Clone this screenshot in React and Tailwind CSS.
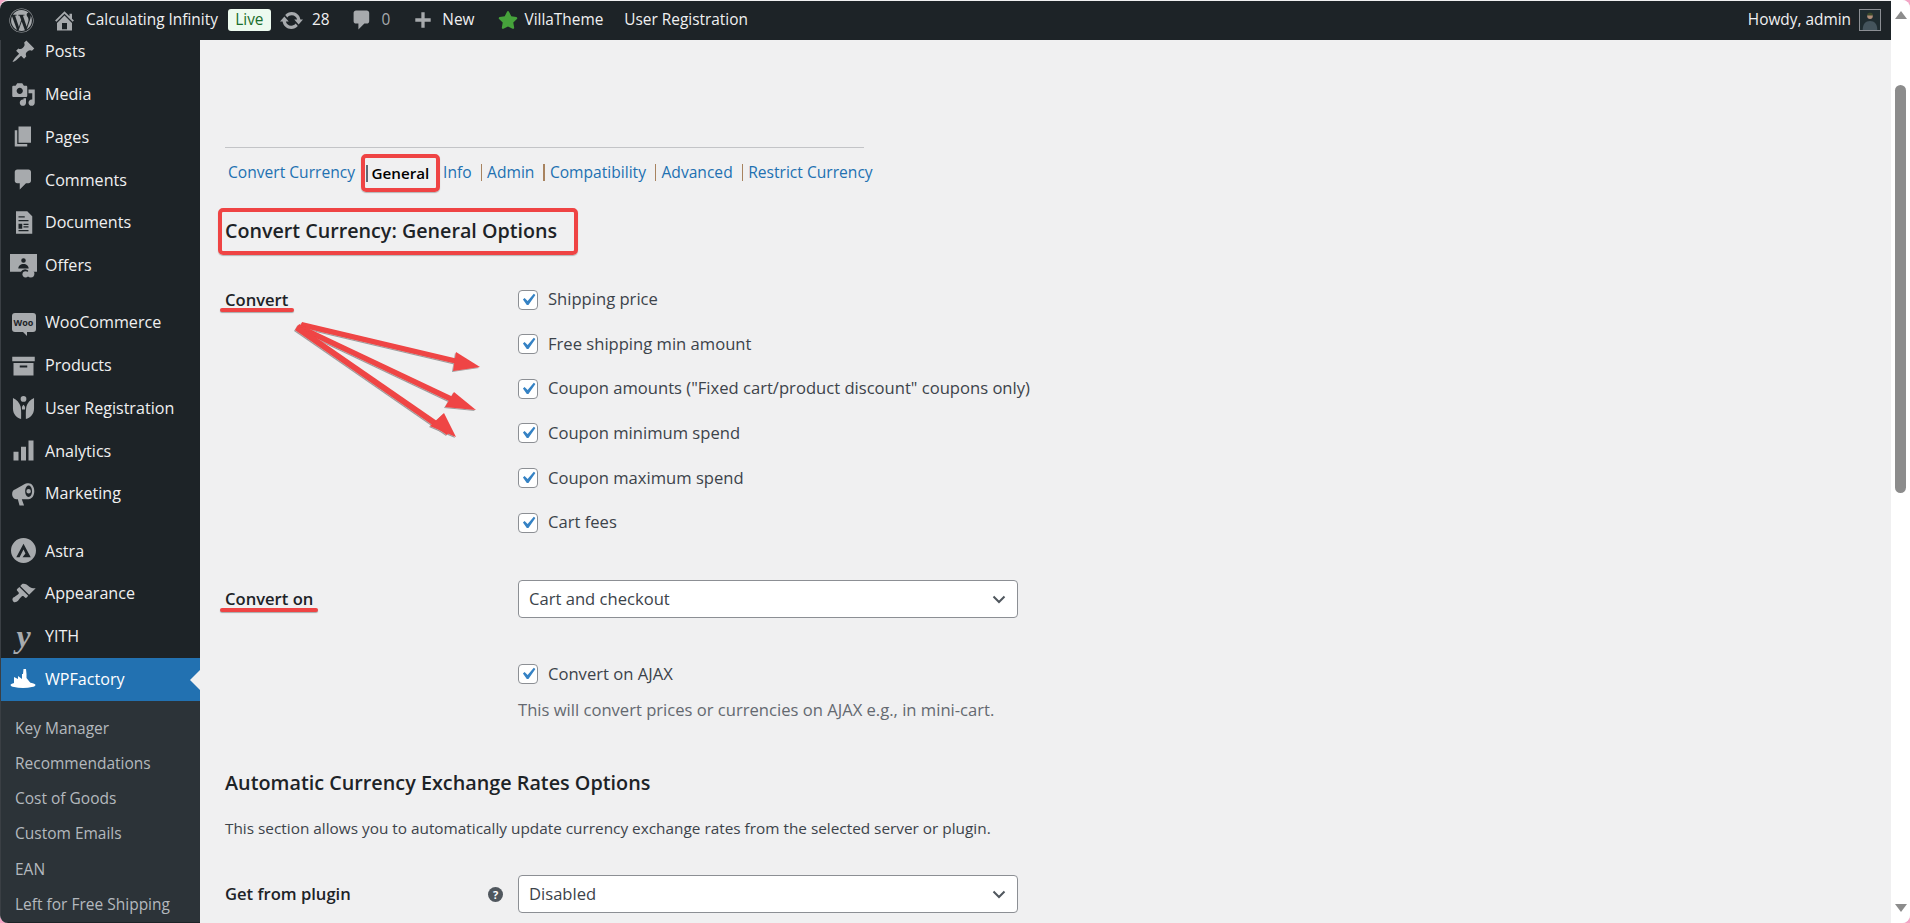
import React from 'react';
import { FaWordpress, FaStar } from 'react-icons/fa';

const Dash = ({ d, className = 'w-[25px] h-[25px] text-[#a7aaad]' }) => (
  <svg viewBox="0 0 20 20" fill="currentColor" className={className}><path d={d} /></svg>
);

const paths = {
  post: 'M10.44 3.02l1.82-1.82 6.36 6.35-1.83 1.82c-1.05-.68-2.48-.57-3.41.36l-.75.75c-.92.93-1.04 2.35-.35 3.41l-1.83 1.82-2.41-2.41-2.8 2.79c-.42.42-3.38 2.71-3.8 2.29s1.86-3.39 2.28-3.81l2.79-2.79L4.1 9.36l1.83-1.82c1.05.69 2.48.57 3.4-.36l.75-.75c.93-.92 1.05-2.35.36-3.41z',
  media: 'M13 11V4c0-.55-.45-1-1-1h-1.67L9 1H5L3.67 3H2c-.55 0-1 .45-1 1v7c0 .55.45 1 1 1h10c.55 0 1-.45 1-1zM7 4.5c1.38 0 2.5 1.12 2.5 2.5S8.38 9.5 7 9.5 4.5 8.38 4.5 7 5.62 4.5 7 4.5zM14 6h5v10.5c0 1.38-1.12 2.5-2.5 2.5S14 17.88 14 16.5s1.12-2.5 2.5-2.5c.17 0 .34.02.5.05V9h-3V6zm-4 8.05V13h2v3.5c0 1.38-1.12 2.5-2.5 2.5S7 17.88 7 16.5 8.12 14 9.5 14c.17 0 .34.02.5.05z',
  page: 'M6 15V2h10v13H6zm-1 1h8v2H3V5h2v11z',
  comment: 'M5 2h9c1.1 0 2 .9 2 2v7c0 1.1-.9 2-2 2h-2l-5 5v-5H5c-1.1 0-2-.9-2-2V4c0-1.1.9-2 2-2z',
  home: 'M16 8.5l1.53 1.53-1.06 1.06L10 4.62l-6.47 6.47-1.06-1.06L10 2.5l4 4v-2h2v4zm-6-2.46l6 5.99V18H4v-5.97zM12 17v-5H8v5h4z',
  update: 'M10.2 3.28c3.53 0 6.43 2.61 6.92 6h2.08l-3.5 4-3.5-4h2.32c-.45-1.97-2.21-3.45-4.32-3.45-1.45 0-2.73.71-3.54 1.78L4.95 5.66C6.23 4.2 8.11 3.28 10.2 3.28zm-.4 13.44c-3.52 0-6.43-2.61-6.92-6H.8l3.5-4c1.17 1.33 2.33 2.67 3.5 4H5.48c.45 1.97 2.21 3.45 4.32 3.45 1.45 0 2.73-.71 3.54-1.78l1.71 1.95c-1.28 1.46-3.15 2.38-5.25 2.38z',
  plus: 'M17 8.5v3h-5.5V17h-3v-5.5H3v-3h5.5V3h3v5.5H17z',
  products: 'M19 6.5V3H1v3.5h18zM2 8v10h16V8H2zm5 2h6v1.5H7V10z',
  analytics: 'M18 18V2h-4v16h4zm-6 0V7H8v11h4zm-6 0v-7H2v7h4z',
  brush: 'M14.48 11.06L7.41 3.99l1.5-1.5c.5-.56 2.3-.47 3.51.32 1.21.8 1.43 1.28 2.91 2.1 1.18.64 2.45 1.26 4.45.85zm-.71.71L6.7 4.7 4.93 6.47c-.39.39-.39 1.02 0 1.41l1.06 1.06c.39.39.39 1.03 0 1.42-.6.6-1.43 1.11-2.21 1.69-.35.26-.7.53-1.01.84C1.43 13.23.4 14.96 1.95 16.5c.94.95 2.86.15 3.68-.75.7-.75 1.13-1.57 1.68-2.13.46-.47.86-.9 1.38-1.4.39-.39 1.03-.39 1.42 0l1.06 1.06c.39.39 1.02.39 1.41 0z',
};

const Documents = () => (
  <svg viewBox="0 0 20 20" className="w-[25px] h-[25px] text-[#a7aaad]" fill="currentColor">
    <path fillRule="evenodd" d="M4 1h9l4 4v14H4V1zm2 4v1h5V5H6zm0 3v1h8V8H6zm0 3v4h3v-4H6zm4 0v1h4v-1h-4zm0 2v1h4v-1h-4zm-4 3v1h8v-1H6z" />
  </svg>
);

const Offers = () => (
  <svg viewBox="0 0 26 24" className="w-[27px] h-[25px] text-[#a7aaad]" fill="currentColor">
    <path fillRule="evenodd" d="M0 1h26v17h-7.5a4.5 4.5 0 0 0-8 0H0V1zm13 4a2.2 2.2 0 1 0 0 4.400a2.200 2.200 0 0 0 0-4.400zm-5 10h10c0-2.800-2.200-4.500-5-4.500S8 12.200 8 15z" />
    <circle cx="15" cy="20.500" r="3" />
    <circle cx="20" cy="20" r="3.500" />
  </svg>
);

const Woo = () => (
  <div className="relative w-[24px] h-[19px] rounded-[3px] bg-[#a7aaad] flex items-center justify-center">
    <span className="text-[9px] leading-none font-bold text-[#1d2327]">Woo</span>
    <span className="absolute -bottom-[4px] left-[11px] w-0 h-0 border-t-[4px] border-t-[#a7aaad] border-l-[4px] border-l-transparent" />
  </div>
);

const UserReg = () => (
  <svg viewBox="0 0 24 26" className="w-[23px] h-[25px] text-[#a7aaad]" fill="currentColor">
    <circle cx="12" cy="4" r="3" />
    <path d="M1 3c4 2 7 5 8 9 .800 4 .500 9 .500 13C5 24 1 20 1 14V3z" />
    <path d="M23 3c-4 2-7 5-8 9-.800 4-.500 9-.500 13C19 24 23 20 23 14V3z" />
    <path d="M12 10c-1.500 1-2 3-1.500 5h3c.500-2 0-4-1.500-5z" />
  </svg>
);

const Megaphone = () => (
  <svg viewBox="0 0 22 22" className="w-[25px] h-[25px] text-[#a7aaad]" fill="currentColor">
    <path fillRule="evenodd" d="M15.500 2c2.800 0 5 3.100 5 7s-2.200 7-5 7H9.500l2 5.500H7.500L6 16H4.500C2.500 16 1 14 1 11.500S2 8 3.500 7.500l9-5C13.500 2 14.500 2 15.500 2zm0 2c-1.700 0-3 2.200-3 5s1.300 5 3 5 3-2.200 3-5-1.300-5-3-5zm0 3a2 2 0 1 1 0 4 2 2 0 0 1 0-4z" />
  </svg>
);

const Astra = () => (
  <svg viewBox="0 0 26 26" className="w-[25px] h-[25px] text-[#a7aaad]" fill="currentColor">
    <path fillRule="evenodd" d="M13 0a13 13 0 1 1 0 26 13 13 0 0 1 0-26zm0 6L5.500 20h3.400L13 12l2 4-3 4h8.500L13 6z" />
  </svg>
);

const Yith = () => (
  <span className="w-[25px] text-center text-[32px] leading-[22px] font-bold italic text-[#a7aaad] font-['Liberation_Serif',serif]">y</span>
);

const Factory = () => (
  <svg viewBox="0 0 26 22" className="w-[26px] h-[22px] text-white" fill="currentColor">
    <path d="M4 15V9l4 2V8l4 3V6h1l.500-5h2.500l.500 5v4l4 5H4z" />
    <ellipse cx="13" cy="17" rx="12.500" ry="3" />
  </svg>
);

const menuGroups = [
  [
    { label: 'Posts', icon: <Dash d={paths.post} /> },
    { label: 'Media', icon: <Dash d={paths.media} /> },
    { label: 'Pages', icon: <Dash d={paths.page} /> },
    { label: 'Comments', icon: <Dash d={paths.comment} /> },
    { label: 'Documents', icon: <Documents /> },
    { label: 'Offers', icon: <Offers /> },
  ],
  [
    { label: 'WooCommerce', icon: <Woo /> },
    { label: 'Products', icon: <Dash d={paths.products} /> },
    { label: 'User Registration', icon: <UserReg /> },
    { label: 'Analytics', icon: <Dash d={paths.analytics} /> },
    { label: 'Marketing', icon: <Megaphone /> },
  ],
  [
    { label: 'Astra', icon: <Astra /> },
    { label: 'Appearance', icon: <Dash d={paths.brush} /> },
    { label: 'YITH', icon: <Yith /> },
  ],
];

const subItems = ['Key Manager', 'Recommendations', 'Cost of Goods', 'Custom Emails', 'EAN', 'Left for Free Shipping'];

function MenuRow({ label, icon }) {
  return (
    <div className="flex items-center h-[42.75px] text-[#f0f0f1] text-[16.1px]">
      <div className="w-[44px] flex justify-center shrink-0 pl-[1px]">{icon}</div>
      <span>{label}</span>
    </div>
  );
}

function Sidebar() {
  return (
    <aside className="w-[200px] shrink-0 bg-[#1d2327] overflow-hidden rounded-bl-[8px] border-l border-l-[#3a3f44]">
      <div className="-mt-[10px] flex flex-col gap-[14.5px]">
        {menuGroups.map((group, i) => (
          <div key={i}>
            {group.map((item) => <MenuRow key={item.label} {...item} />)}
          </div>
        ))}
      </div>
      <div className="relative flex items-center h-[43px] bg-[#2271b1] text-white text-[16.1px]">
        <div className="w-[44px] flex justify-center shrink-0"><Factory /></div>
        <span>WPFactory</span>
        <span className="absolute right-0 top-[12px] w-0 h-0 border-y-[10px] border-y-transparent border-r-[10px] border-r-[#f0f0f1]" />
      </div>
      <div className="bg-[#2c3338] pt-[10px] pl-[14px] text-[15.5px] text-[#b4b9be]">
        {subItems.map((s) => (
          <div key={s} className="h-[35.3px] flex items-center">{s}</div>
        ))}
      </div>
    </aside>
  );
}

function AdminBar() {
  return (
    <header className="h-[39px] mt-[1px] shrink-0 bg-[#1d2327] flex items-center text-[#f0f0f1] rounded-tl-[8px] mr-[19px] text-[15.4px] pb-[1px] pl-[9px] pr-[10px]">
      <FaWordpress className="w-[25px] h-[25px] text-[#a7aaad]" />
      <div className="ml-[18px] flex items-center gap-[9px]">
        <Dash d={paths.home} />
        <span>Calculating Infinity</span>
      </div>
      <span className="ml-[10px] w-[43px] h-[22px] rounded-[3px] bg-[#edfaef] text-[#1a6e2c] flex items-center justify-center">Live</span>
      <div className="ml-[8px] flex items-center gap-[8px]">
        <Dash d={paths.update} className="w-[25px] h-[25px] text-[#a7aaad]" />
        <span>28</span>
      </div>
      <div className="ml-[21px] flex items-center gap-[7px]">
        <Dash d={paths.comment} className="w-[24px] h-[24px] text-[#a7aaad]" />
        <span className="text-[#a7aaad]">0</span>
      </div>
      <div className="ml-[22px] flex items-center gap-[8px]">
        <Dash d={paths.plus} className="w-[22px] h-[22px] text-[#a7aaad]" />
        <span>New</span>
      </div>
      <div className="ml-[24px] flex items-center gap-[6px]">
        <FaStar className="w-[20px] h-[20px] text-[#46a23b]" />
        <span>VillaTheme</span>
      </div>
      <span className="ml-[21px]">User Registration</span>
      <div className="ml-auto flex items-center gap-[8px]">
        <span>Howdy, admin</span>
        <svg viewBox="0 0 22 22" className="w-[22px] h-[22px] border border-[#8c8f94] bg-[#1f2c30]">
          <circle cx="11" cy="7" r="3" fill="#b08d78" />
          <path d="M8 4.500c1-2 5-2 6 0l-.500 1.500h-5z" fill="#3b4a2a" />
          <path d="M3 22c0-7 3-10 8-10s8 3 8 10z" fill="#44545c" />
        </svg>
      </div>
    </header>
  );
}

function Checkbox() {
  return (
    <div className="w-[20px] h-[20px] shrink-0 bg-white border border-[#8c8f94] rounded-[4px] flex items-center justify-center">
      <svg viewBox="0 0 20 20" className="w-[24px] h-[24px] shrink-0 text-[#3582c4]" fill="currentColor">
        <path d="M14.830 4.890l1.340.940-5.810 8.380H9.020L5.780 9.670l1.340-1.250 2.570 2.400z" />
      </svg>
    </div>
  );
}

function CheckRow({ label }) {
  return (
    <div className="flex items-center gap-[10px] h-[44.6px]">
      <Checkbox />
      <span>{label}</span>
    </div>
  );
}

function Select({ value }) {
  return (
    <div className="w-[500px] h-[38px] bg-white border border-[#8c8f94] rounded-[4px] flex items-center justify-between pl-[10px] pr-[10px]">
      <span>{value}</span>
      <svg viewBox="0 0 16 16" className="w-[16px] h-[16px] text-[#50575e]" fill="none" stroke="currentColor" strokeWidth="2">
        <path d="M2.500 5.500L8 11l5.500-5.500" />
      </svg>
    </div>
  );
}

function RedLine({ className }) {
  return <div className={`absolute h-[4px] rounded-full bg-[#ef4444] shadow-[0_1px_1px_rgba(0,0,0,0.3)] ${className}`} />;
}

function Arrows() {
  return (
    <svg className="absolute left-[73px] top-[47px] w-[190px] h-[120px] overflow-visible" viewBox="0 0 190 120" fill="none">
      <defs>
        <filter id="sh" x="-10%" y="-10%" width="120%" height="120%"><feDropShadow dx="-1" dy="1" stdDeviation="0.500" floodColor="#000" floodOpacity="0.350" /></filter>
      </defs>
      <g filter="url(#sh)" fill="#ef4444">
        <path d="M4 -2L173 38L172 43L2 3Z" />
        <path d="M158 28L182 43L155 47Z" />
        <path d="M1 0L170 80L168 85L-1 5Z" />
        <path d="M156 68L178 86L147 83Z" />
        <path d="M0 1L152 106L149 111L-3 6Z" />
        <path d="M146 89L158 113L132 102Z" />
      </g>
    </svg>
  );
}

const navItems = ['Info', 'Admin', 'Compatibility', 'Advanced', 'Restrict Currency'];

function Tabs() {
  return (
    <div className="w-[639px] border-t border-t-[#c3c4c7] flex items-center h-[52px] pl-[3px] text-[15.6px] text-[#2271b1] pb-[1px] whitespace-nowrap">
      <span>Convert Currency</span>
      <div className="ml-[6px] w-[79px] h-[38px] border-4 border-[#ef4444] rounded-[5px] flex items-center shrink-0 shadow-[0_1px_1px_rgba(0,0,0,0.25)]">
        <span className="w-[1.5px] h-[17px] ml-[1px] bg-[#5f6a75]" />
        <span className="font-semibold text-black text-[15.2px] ml-[4px]">General</span>
      </div>
      <div className="ml-[3px] flex">
        {navItems.map((n, i) => (
          <span key={n} className="flex items-center">
            {i > 0 && <span className="w-[1.5px] h-[17px] ml-[9px] mr-[5px] bg-[#a8835f]" />}
            {n}
          </span>
        ))}
      </div>
    </div>
  );
}

function Main() {
  return (
    <main className="flex-1 pl-[25px] pt-[107px] text-[16.6px] text-[#3c434a] overflow-hidden">
      <Tabs />
      <div className="mt-[9px] -ml-[7px] w-[360px] h-[47px] border-4 border-[#ef4444] rounded-[5px] flex items-center pl-[3px] pb-[2px] text-[19.7px] font-semibold text-[#1d2327] shadow-[0_1px_1px_rgba(0,0,0,0.25)]">
        Convert Currency: General Options
      </div>

      <div className="relative flex mt-[22.4px]">
        <div className="w-[293px] shrink-0 font-semibold text-[#1d2327] pt-[11px] leading-[23px]">Convert</div>
        <RedLine className="left-[-5px] top-[31px] w-[74px]" />
        <Arrows />
        <div>
          {['Shipping price', 'Free shipping min amount', 'Coupon amounts ("Fixed cart/product discount" coupons only)', 'Coupon minimum spend', 'Coupon maximum spend', 'Cart fees'].map((l) => (
            <CheckRow key={l} label={l} />
          ))}
        </div>
      </div>

      <div className="relative flex mt-[35px]">
        <div className="w-[293px] shrink-0 font-semibold text-[#1d2327] pt-[7px] leading-[23px]">Convert on</div>
        <RedLine className="left-[-5px] top-[28px] w-[98px]" />
        <Select value="Cart and checkout" />
      </div>

      <div className="pl-[293px] mt-[44px]">
        <div className="flex items-center gap-[10px] h-[24px]">
          <Checkbox />
          <span>Convert on AJAX</span>
        </div>
        <p className="mt-[12.5px] leading-[23px] text-[#646970]">This will convert prices or currencies on AJAX e.g., in mini-cart.</p>
      </div>

      <h2 className="mt-[49px] text-[19.8px] leading-[26px] font-semibold text-[#1d2327]">Automatic Currency Exchange Rates Options</h2>
      <p className="mt-[21px] leading-[22px] text-[15.35px]">This section allows you to automatically update currency exchange rates from the selected server or plugin.</p>

      <div className="flex items-center mt-[36px]">
        <div className="w-[293px] shrink-0 flex items-center justify-between pr-[15px]">
          <span className="font-semibold text-[#1d2327]">Get from plugin</span>
          <span className="w-[15px] h-[15px] rounded-full bg-[#50575e] text-white text-[11px] font-bold leading-none flex items-center justify-center">?</span>
        </div>
        <Select value="Disabled" />
      </div>
    </main>
  );
}

function Scrollbar() {
  return (
    <div className="absolute right-0 top-0 bottom-0 w-[19px] bg-white rounded-tr-[8px] rounded-br-[8px] flex flex-col items-center">
      <span className="mt-[11px] w-0 h-0 border-x-[6px] border-x-transparent border-b-[8px] border-b-[#8c8c8c]" />
      <div className="mt-[66px] w-[11px] h-[408px] rounded-full bg-[#8c8c8c]" />
      <span className="mt-auto mb-[11px] w-0 h-0 border-x-[6px] border-x-transparent border-t-[8px] border-t-[#8c8c8c]" />
    </div>
  );
}

export default function App() {
  return (
    <div className="relative w-[1910px] h-[923px] overflow-hidden bg-[#f4a6c6] font-['Open_Sans',sans-serif]">
      <div className="absolute inset-0 rounded-[8px] bg-[#f0f0f1]" />
      <div className="relative h-full flex flex-col">
        <AdminBar />
        <div className="flex-1 min-h-0 flex pr-[19px]">
          <Sidebar />
          <Main />
        </div>
      </div>
      <Scrollbar />
    </div>
  );
}
